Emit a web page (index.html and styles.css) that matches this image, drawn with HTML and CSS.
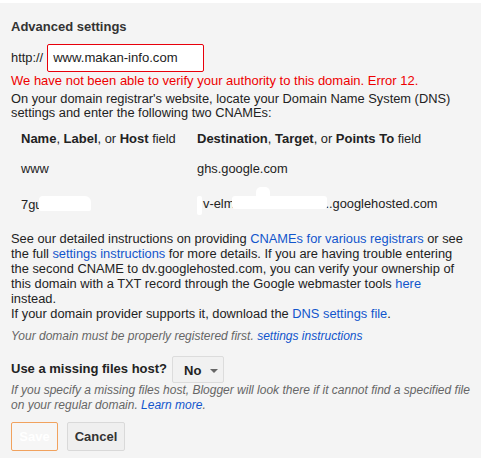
FILE: index.html
```html
<!DOCTYPE html>
<html>
<head>
<meta charset="utf-8">
<link rel="stylesheet" href="styles.css">
</head>
<body>
<div class="panel">
  <div class="heading">Advanced settings</div>
  <div class="url-row">
    <span class="prefix">http://</span>
    <input class="url-input" type="text" value="www.makan-info.com">
  </div>
  <div class="error">We have not been able to verify your authority to this domain. Error 12.</div>
  <div class="intro">On your domain registrar's website, locate your Domain Name System (DNS)<br>settings and enter the following two CNAMEs:</div>
  <div class="cname-table">
    <div class="cell head"><b>Name</b>, <b>Label</b>, or <b>Host</b> field</div>
    <div class="cell head"><b>Destination</b>, <b>Target</b>, or <b>Points To</b> field</div>
    <div class="cell row1">www</div>
    <div class="cell row1">ghs.google.com</div>
    <div class="cell row2">7gu<span class="redact r1"></span></div>
    <div class="cell row2"><span class="redact r2"></span>v-elm<span class="redact r3"><span class="bump"></span></span>..googlehosted.com</div>
  </div>
  <div class="body-text">See our detailed instructions on providing <a href="#">CNAMEs for various registrars</a> or see<br>the full <a href="#">settings instructions</a> for more details. If you are having trouble entering<br>the second CNAME to dv.googlehosted.com, you can verify your ownership of<br>this domain with a TXT record through the Google webmaster tools <a href="#">here</a><br>instead.<br>If your domain provider supports it, download the <a href="#">DNS settings file</a>.</div>
  <div class="note first-note">Your domain must be properly registered first. <a href="#">settings instructions</a></div>
  <div class="host-row">
    <span class="host-label">Use a missing files host?</span>
    <span class="select">No <span class="caret"></span></span>
  </div>
  <div class="note">If you specify a missing files host, Blogger will look there if it cannot find a specified file<br>on your regular domain. <a href="#">Learn more</a>.</div>
  <div class="buttons">
    <button class="btn save">Save</button>
    <button class="btn cancel">Cancel</button>
  </div>
</div>
</body>
</html>
```

FILE: styles.css
```css
html, body {
  margin: 0;
  padding: 0;
  background: #ffffff;
}

body {
  font-family: "Liberation Sans", Arial, sans-serif;
  font-size: 12.85px;
  line-height: 15px;
  color: #222222;
}

b {
  font-size: 13px;
}

.panel {
  margin-top: 3px;
  width: 481px;
  height: 455px;
  padding: 16px 0 0 11px;
  box-sizing: border-box;
  background: #f4f4f4;
}

a {
  color: #1155cc;
  text-decoration: none;
}

.heading {
  font-size: 13px;
  font-weight: bold;
  color: #333333;
  margin-bottom: 10px;
}

.intro,
.body-text,
.note,
.error {
  white-space: nowrap;
}

.url-row {
  display: flex;
  align-items: center;
  gap: 4px;
  height: 28px;
}

.prefix {
  color: #222222;
  position: relative;
  top: -1px;
}

.url-input {
  box-sizing: border-box;
  width: 157px;
  height: 28px;
  margin: 0;
  padding: 0 0 2px 5px;
  border: 1px solid #e8000b;
  border-radius: 2px;
  background: #ffffff;
  font-family: "Liberation Sans", Arial, sans-serif;
  font-size: 13.1px;
  color: #222222;
  outline: none;
}

.error {
  margin-top: 1px;
  font-size: 13px;
  color: #ee0000;
}

.intro {
  margin-top: 4px;
  line-height: 14px;
}

.cname-table {
  margin-top: 11px;
  padding-left: 10px;
  display: grid;
  grid-template-columns: 176px auto;
}

.cell {
  white-space: nowrap;
}

.cell.head {
  height: 30px;
}

.cell.row1,
.cell.row2 {
  height: 35px;
}

.redact {
  display: inline-block;
  background: #ffffff;
  vertical-align: -2px;
  position: relative;
}

.r1 {
  width: 52px;
  height: 15px;
  border-radius: 4px 6px 2px 2px;
  margin-left: -3px;
}

.r2 {
  width: 5px;
  height: 19px;
  vertical-align: -7px;
  margin-right: 1px;
  border-radius: 2px;
}

.r3 {
  width: 95px;
  height: 13px;
  border-radius: 3px;
  margin-left: -2px;
  margin-right: -2px;
  vertical-align: -1px;
}

.bump {
  position: absolute;
  left: 24px;
  top: -9px;
  width: 14px;
  height: 12px;
  background: #ffffff;
  border-radius: 5px 5px 0 0;
}

.note {
  font-size: 12px;
  font-style: italic;
  color: #666666;
}

.first-note {
  margin-top: 8px;
}

.host-row {
  margin-top: 12px;
  display: flex;
  align-items: center;
  gap: 5px;
  height: 27px;
}

.host-label {
  font-size: 13px;
  font-weight: bold;
  color: #222222;
  position: relative;
  top: -1px;
}

.select {
  box-sizing: border-box;
  width: 52px;
  height: 27px;
  display: inline-flex;
  align-items: center;
  padding-left: 11px;
  border: 1px solid #dcdcdc;
  border-radius: 2px;
  background: #f1f1f1;
  font-size: 13px;
  font-weight: bold;
  color: #222222;
  padding-top: 2px;
}

.caret {
  display: inline-block;
  width: 0;
  height: 0;
  margin-left: 9px;
  border-left: 4px solid transparent;
  border-right: 4px solid transparent;
  border-top: 4px solid #666666;
}

.buttons {
  margin-top: 9px;
  display: flex;
  gap: 9px;
}

.btn {
  box-sizing: border-box;
  height: 29px;
  margin: 0;
  border-radius: 2px;
  font-family: "Liberation Sans", Arial, sans-serif;
  font-size: 13px;
  font-weight: bold;
  padding: 0;
}

.save {
  width: 47px;
  border: 1px solid #f1a25e;
  background: #f6f6f6;
  color: #ffffff;
}

.cancel {
  width: 58px;
  border: 1px solid #d9d9d9;
  background: #efefef;
  color: #333333;
}
```
